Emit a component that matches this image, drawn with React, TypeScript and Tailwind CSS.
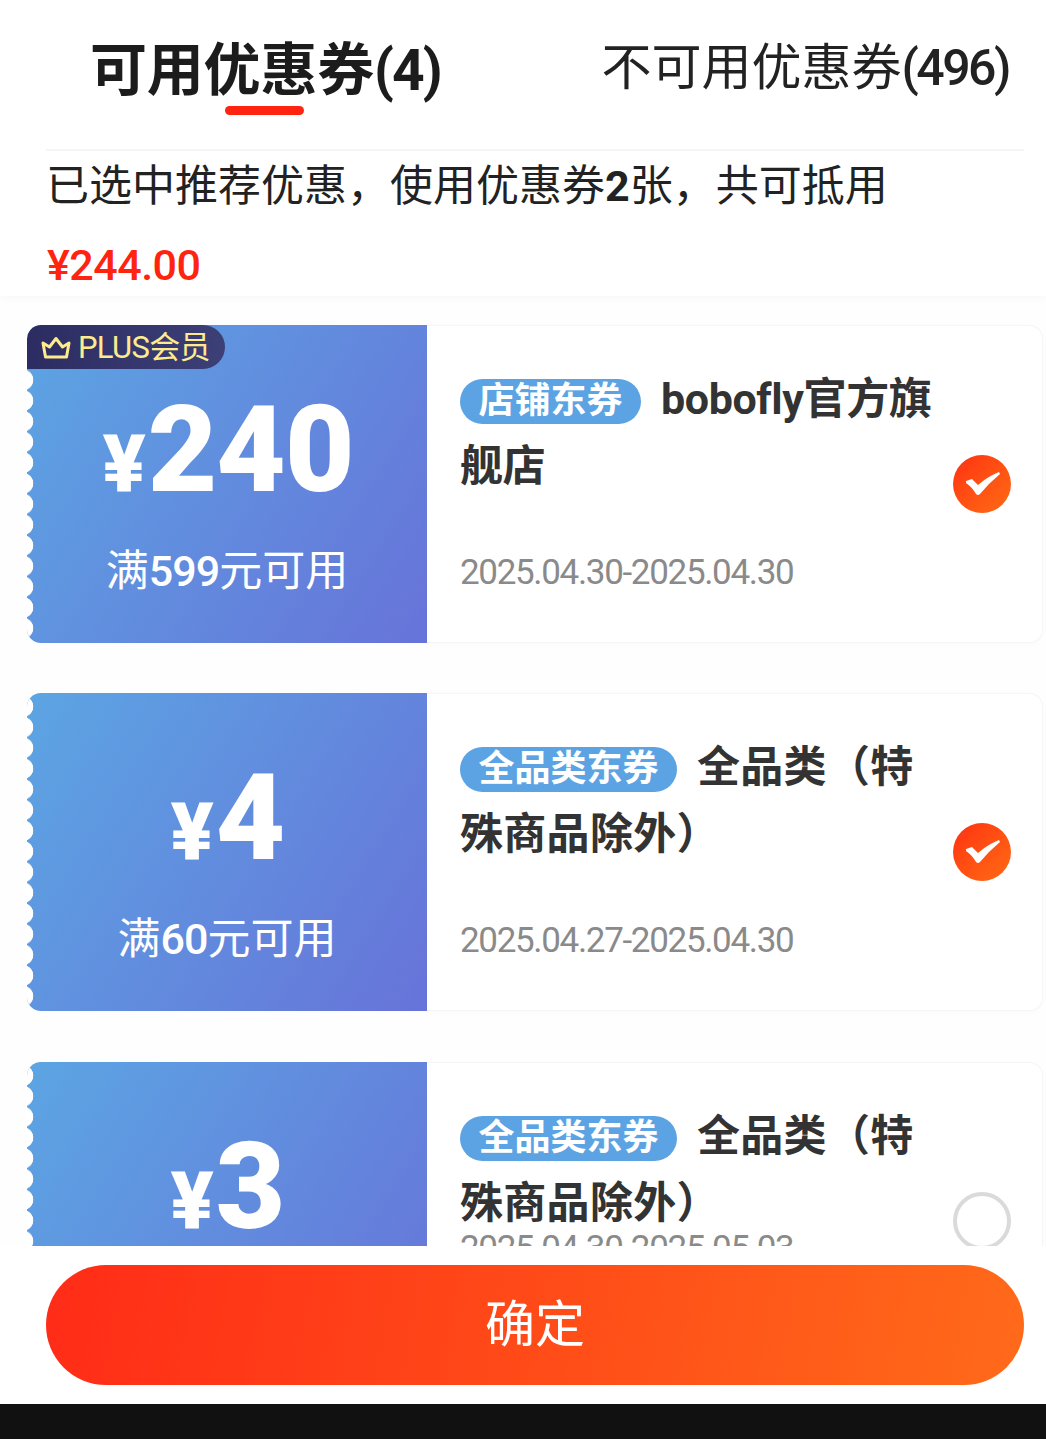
const cjk = "font-['Roboto','Noto_Sans_CJK_SC',sans-serif]"

interface Coupon {
  amount: string
  amountClass: string
  limit: string
  tag: string
  title: string
  titleClass: string
  date: string
  dateClass: string
  checked: boolean
  plus?: boolean
}

const coupons: Coupon[] = [
  {
    amount: "240",
    amountClass: "tracking-[-1px]",
    limit: "599",
    tag: "店铺东券",
    title: "bobofly官方旗舰店",
    titleClass: "tracking-[-0.4px]",
    date: "2025.04.30-2025.04.30",
    dateClass: "mt-[53px]",
    checked: true,
    plus: true,
  },
  {
    amount: "4",
    amountClass: "",
    limit: "60",
    tag: "全品类东券",
    title: "全品类（特殊商品除外）",
    titleClass: "tracking-[0.3px]",
    date: "2025.04.27-2025.04.30",
    dateClass: "mt-[53px]",
    checked: true,
  },
  {
    amount: "3",
    amountClass: "",
    limit: "30",
    tag: "全品类东券",
    title: "全品类（特殊商品除外）",
    titleClass: "tracking-[0.3px]",
    date: "2025.04.30-2025.05.03",
    dateClass: "mt-[-8px]",
    checked: false,
  },
]

function CheckMark({ checked }: { checked: boolean }) {
  if (!checked) {
    return <div className="h-[58px] w-[58px] shrink-0 rounded-full border-[4px] border-[#dadada] bg-white" />
  }
  return (
    <div className="flex h-[58px] w-[58px] shrink-0 items-center justify-center rounded-full bg-gradient-to-br from-[#ff2c12] to-[#ff6a14]">
      <svg width="38" height="30" viewBox="0 0 38 30">
        <path d="M3 12 L9 10 L15 16 Q24 8 36 3 L37 5 Q26 14 17 25 Q15 27 13 25 Q9 18 3 14 Z" fill="#fff" />
      </svg>
    </div>
  )
}

function PlusTag() {
  return (
    <div className="absolute left-0 top-0 z-10 flex h-[44px] w-[198px] items-center rounded-tl-[14px] rounded-tr-[22px] rounded-br-[22px] bg-gradient-to-r from-[#2c2c62] to-[#3c4077] pl-[14px]">
      <svg width="30" height="23" viewBox="0 0 30 23" fill="none" stroke="#fdeb8e" strokeWidth="3" strokeLinejoin="round">
        <path d="M2 7 L8.5 11 L15 2.5 L21.5 11 L28 7 L25.5 21 L4.5 21 Z" />
      </svg>
      <span className="ml-[7px] text-[31px] leading-none tracking-[-0.7px] text-[#fdeb8e]">PLUS会员</span>
    </div>
  )
}

function CouponCard({ coupon }: { coupon: Coupon }) {
  return (
    <div className="ml-[27px] mr-[3px] flex h-[318px] shrink-0">
      <div className="relative flex w-[400px] shrink-0 flex-col items-center overflow-hidden rounded-l-[14px] bg-[linear-gradient(122deg,#5ca5e3,#6773d9)] text-white">
        {coupon.plus && <PlusTag />}
        <div className="absolute bottom-0 left-0 top-0 w-[7px] bg-[radial-gradient(circle_at_-4px_50%,#ffffff_10px,transparent_10.6px)] bg-[length:7px_20.7px] bg-[position:0_3.2px]" />
        <div className="mt-[60px] flex h-[130px] items-baseline pl-[2px]">
          <span className="text-[80px] font-black leading-none">¥</span>
          <span className={`ml-[2px] text-[120px] font-black leading-[130px] ${coupon.amountClass}`}>{coupon.amount}</span>
        </div>
        <div className="mt-[31px] text-[43px] leading-[50px]">
          满<span className="font-medium tracking-[-1px]">{coupon.limit}</span>元可用
        </div>
      </div>
      <div className="flex min-w-0 flex-1 items-center rounded-r-[14px] border border-l-0 border-[#f6f6f6] bg-white pl-[33px] pr-[31px] shadow-[0_2px_6px_rgba(0,0,0,0.02)]">
        <div className="h-full w-[476px] shrink-0 pt-[40px]">
          <div className={`text-[43px] font-bold leading-[67px] text-[#333333] ${coupon.titleClass}`}>
            <span className="mr-[20px] inline-block h-[45px] rounded-full bg-[#5ca3e4] px-[18.5px] align-[1px] text-[36px] leading-[45px] tracking-normal text-white">
              {coupon.tag}
            </span>
            {coupon.title}
          </div>
          <div className={`h-[40px] text-[35px] leading-[40px] tracking-[-1.33px] text-[#8a8a8a] ${coupon.dateClass}`}>{coupon.date}</div>
        </div>
        <div className="ml-auto">
          <CheckMark checked={coupon.checked} />
        </div>
      </div>
    </div>
  )
}

export default function App() {
  return (
    <div className={`flex h-[1439px] w-[1046px] flex-col overflow-hidden bg-[#fefefe] ${cjk}`}>
      <div className="z-10 h-[296px] shrink-0 bg-white shadow-[0_2px_8px_rgba(0,0,0,0.03)]">
        <div className="flex h-[149px] items-start">
          <div className="relative ml-[90px] mt-[33px] text-[57px] font-bold leading-[76px] tracking-[-0.2px] text-[#1c1c1c]">
            可用优惠券<span className="tracking-[-2px]">(4)</span>
            <div className="absolute left-[135px] top-[73px] h-[9px] w-[79px] rounded-full bg-[#ff2410]" />
          </div>
          <div className="ml-auto mr-[37px] mt-[35px] text-[50px] leading-[67px] text-[#222222]">
            不可用优惠券<span className="font-medium tracking-[-2.5px]">(496)</span>
          </div>
        </div>
        <div className="ml-[46px] mr-[22px] border-t-2 border-[#f5f5f5] pt-[5px]">
          <div className="text-[43px] leading-[60px] text-[#222222]">
            已选中推荐优惠，使用优惠券<span className="font-bold">2</span>张，共可抵用
          </div>
          <div className="mt-[19px] pl-[1px] text-[43px] font-medium leading-[60px] tracking-[-0.5px] text-[#ff2410]">¥244.00</div>
        </div>
      </div>
      <div className="flex min-h-0 flex-1 flex-col gap-[50.3px] overflow-hidden pt-[29px]">
        {coupons.map((c) => (
          <CouponCard key={c.amount} coupon={c} />
        ))}
      </div>
      <div className="z-10 flex h-[158px] shrink-0 items-start bg-white pl-[46px] pt-[19px]">
        <button className="h-[120px] w-[978px] rounded-full bg-[linear-gradient(100deg,#ff2c17,#ff6a1a)] text-[50px] text-white">
          确定
        </button>
      </div>
      <div className="h-[35px] shrink-0 bg-[#111111]" />
    </div>
  )
}
